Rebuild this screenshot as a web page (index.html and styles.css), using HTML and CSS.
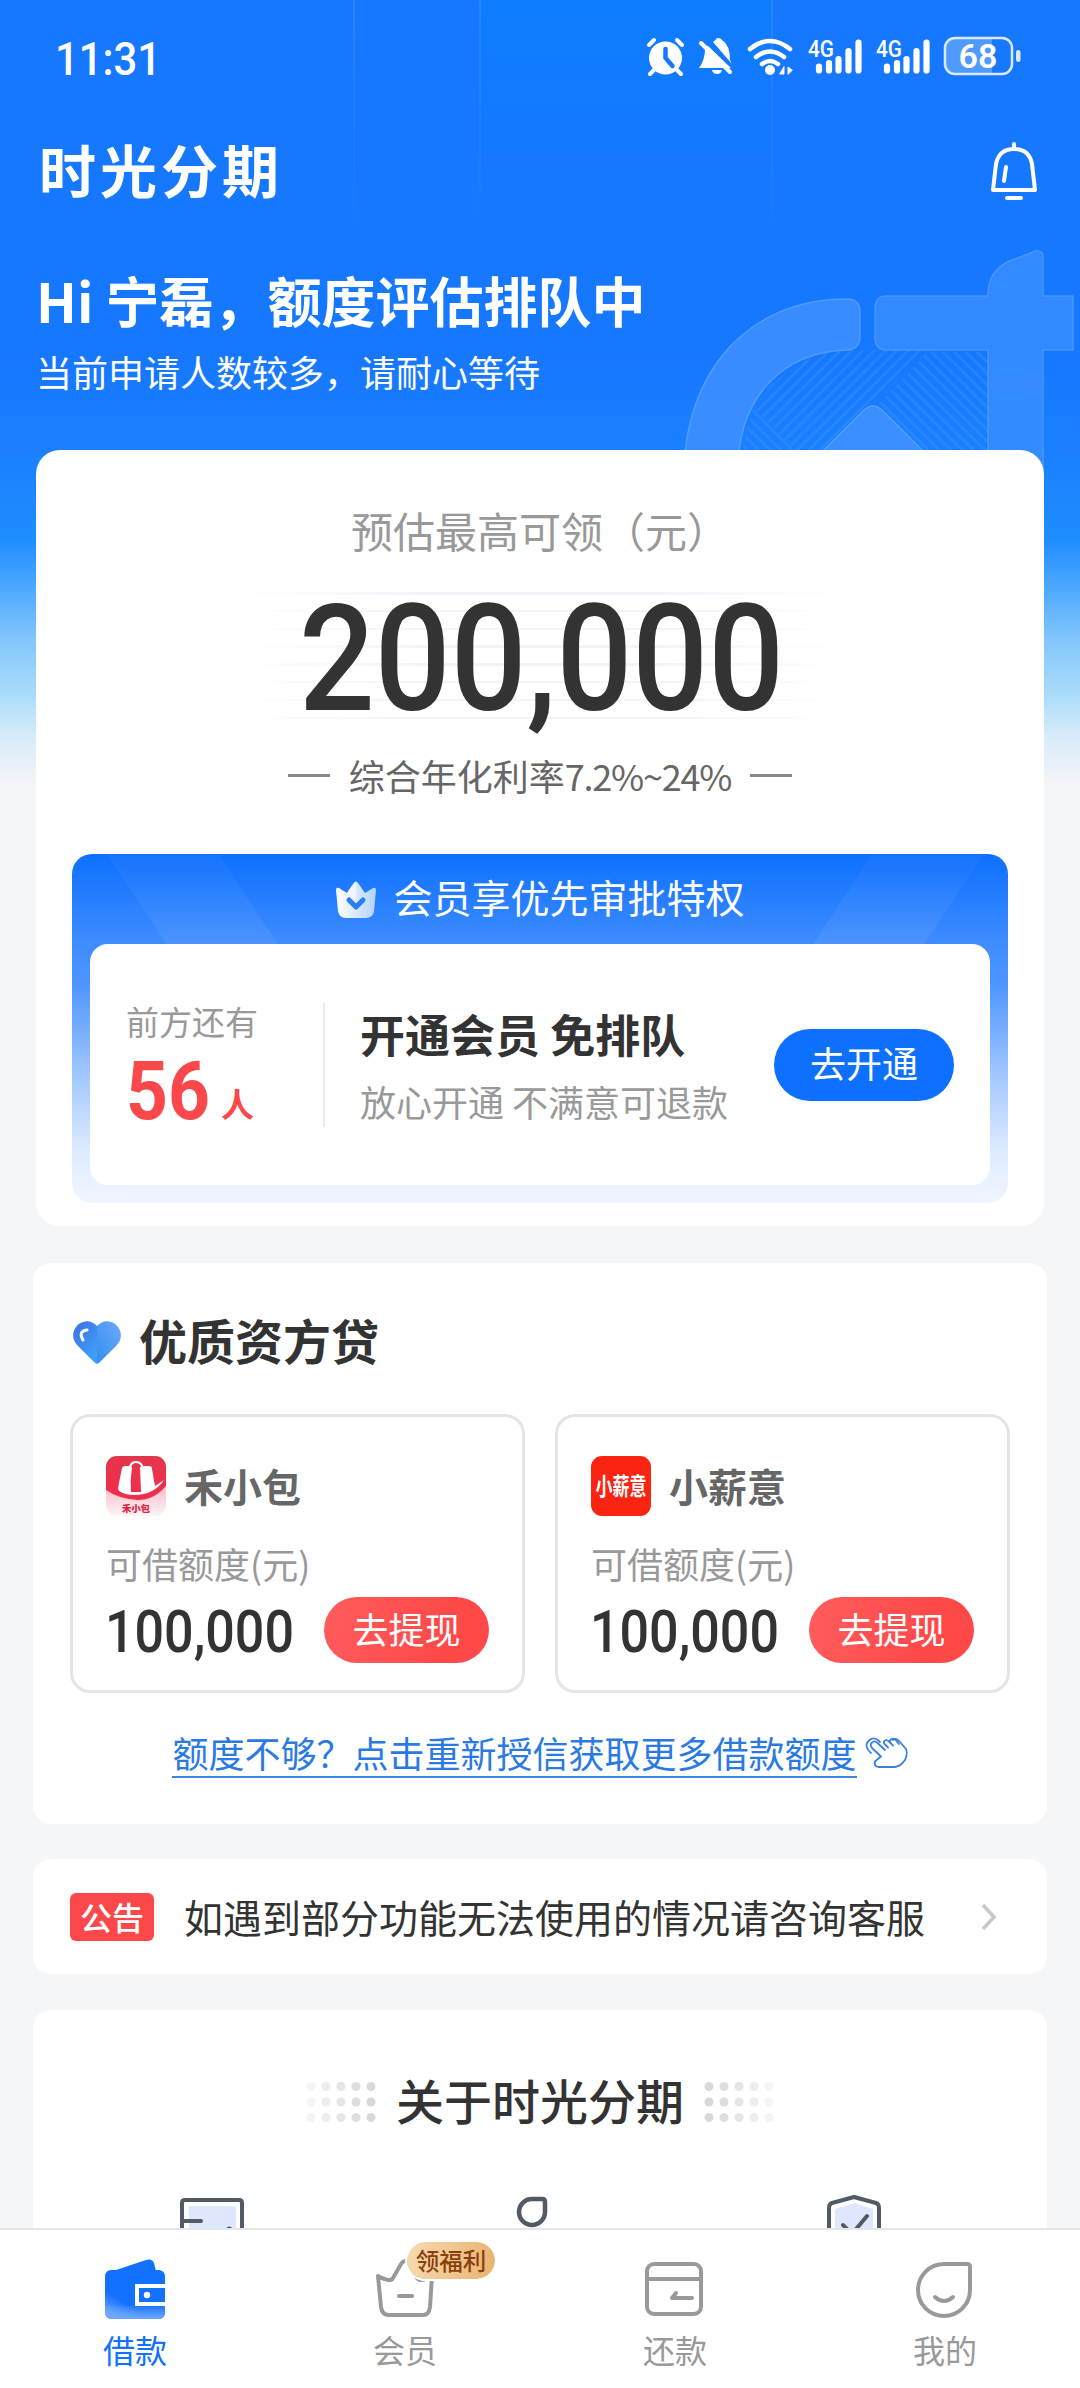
FILE: index.html
```html
<!DOCTYPE html>
<html lang="zh-CN">
<head>
<meta charset="utf-8">
<title>时光分期</title>
<link rel="stylesheet" href="styles.css">
</head>
<body>
<div class="app">
  <svg class="hero-art" viewBox="0 0 1080 790" width="1080" height="790" aria-hidden="true">
    <defs>
      <linearGradient id="band" x1="0" y1="0" x2="0" y2="1"><stop offset="0" stop-color="#08f" stop-opacity=".55"/><stop offset="1" stop-color="#08f" stop-opacity="0"/></linearGradient>
      <linearGradient id="edge" x1="0" y1="0" x2="0" y2="1"><stop offset="0" stop-color="#fff" stop-opacity=".09"/><stop offset="1" stop-color="#fff" stop-opacity="0"/></linearGradient>
      <pattern id="up" width="8" height="8" patternUnits="userSpaceOnUse" patternTransform="rotate(45)"><path d="M2 0v8" stroke="#3c96ff" stroke-width="2.500"/></pattern>
      <pattern id="down" width="8" height="8" patternUnits="userSpaceOnUse" patternTransform="rotate(-45)"><path d="M2 0v8" stroke="#3c96ff" stroke-width="2.500"/></pattern>
    </defs>
    <path d="M480 0H772V230H480Z" fill="url(#band)" opacity=".6"/>
    <path d="M353 0h2v240h-2zM479 0h2v240h-2zM771 0h2v240h-2z" fill="url(#edge)"/>
    <path d="M850 350H930L863 415L820 460H805L754 408Q790 352 850 350Z" fill="url(#up)" opacity=".4"/>
    <path d="M928 352H988V460H923L878 405ZM753 408L804 460H740Z" fill="url(#down)" opacity=".4"/>
    <g fill="#3f90ff" stroke="#57a5ff" stroke-width="1.5">
      <path d="M684 470C686 375 745 299 847 299Q860 299 860 312V337Q860 349 847 350C780 352 738 400 738 470Z" opacity=".85"/>
      <path d="M887 296H988Q987 270 1012 260L1036 251Q1043 250 1043 257V296H1073V350H1043V470H988V350H887Q875 350 875 338V308Q875 296 887 296Z" opacity=".72"/>
      <path d="M804 470L863 411Q873 401 883 411L942 470Z" opacity=".9"/>
    </g>
  </svg>

  <header class="hero">
    <div class="status">
      <svg class="clock" viewBox="0 0 110 70" width="110" height="70"><text x="0" y="50" textLength="106" lengthAdjust="spacingAndGlyphs">11:31</text></svg>
      <svg class="status-icons" viewBox="0 -12 376 60" width="376" height="60">
        <g fill="#fff" stroke="#fff" stroke-linecap="round">
          <circle cx="19.500" cy="21" r="16.500" stroke="none"/>
          <path d="M3 8L8 3M31 3l5 5M8 33l-4 4M31 33l4 4" stroke-width="4"/>
          <path d="M19.500 12v9l7 8" fill="none" stroke="#1677ff" stroke-width="4.500"/>
          <path d="M59 12Q59 23 53 31H86L63 8Q60 9 59 12ZM67 5Q70 3 71 1Q75 1 76 3Q84 8 84 23L86 27Z" stroke="none"/>
          <path d="M66 33h10q-1 4-5 4t-5-4Z" stroke="none"/>
          <path d="M57 2L88 32" stroke="#1677ff" stroke-width="3"/>
          <path d="M55 6L84 35" stroke-width="4"/>
          <g fill="none" stroke-width="4.500"><path d="M104 12Q124-4 144 12"/><path d="M110 20Q124 9 138 20"/><path d="M116 27Q124 21 132 27"/></g>
          <circle cx="124" cy="33" r="5" stroke="none"/>
          <path d="M138 30v7h-4zM142 37V30l4 3z" stroke-width="1"/>
          <path d="M173 29.500v4M183 26v7.500M192.500 22v11.500M202.500 14v19.500M212.500 5.500v28M241 29.500v4M251 26v7.500M260.500 22v11.500M270.500 14v19.500M280.500 5.500v28" stroke-width="6.200"/>
        </g>
        <g fill="#fff" class="net"><text x="162" y="20" textLength="26" lengthAdjust="spacingAndGlyphs">4G</text><text x="230" y="20" textLength="26" lengthAdjust="spacingAndGlyphs">4G</text></g>
        <path d="M309 1H346V37H309Q299 37 299 27V11Q299 1 309 1Z" fill="#fff" opacity=".25"/>
        <rect x="299" y="1" width="67" height="36" rx="10" fill="none" stroke="#d9eaff" stroke-width="2.500"/>
        <rect x="370" y="13" width="4.500" height="12" rx="2.200" fill="#d9eaff"/>
        <text class="battery" x="332" y="31" text-anchor="middle">68</text>
      </svg>
    </div>
    <div class="brand-row">
      <svg class="brand" viewBox="0 0 244 90" width="244" height="90"><text x="0" y="64" textLength="240" lengthAdjust="spacing">时光分期</text></svg>
      <svg class="bell" viewBox="0 0 48 60" width="48" height="60"><path d="M24 3V7M6 23Q9 8 24 8T42 23L45 49H3Z"/><path d="M16 26L14 40"/><path d="M17 57H31"/></svg>
    </div>
    <h1 class="greeting">Hi 宁磊，额度评估排队中</h1>
    <p class="wait">当前申请人数较多，请耐心等待</p>
  </header>

  <main class="content">
    <section class="quota">
      <p class="quota-label">预估最高可领（元）</p>
      <div class="quota-number">
        <svg viewBox="0 0 600 128" width="600" height="128"><text x="59" y="118" textLength="485" lengthAdjust="spacingAndGlyphs">200,000</text></svg>
      </div>
      <p class="rate"><i></i><span>综合年化利率<span class="tight">7.2%~24%</span></span><i></i></p>
      <div class="vip">
        <div class="vip-head">
          <svg viewBox="0 0 42 38" width="42" height="38"><defs><linearGradient id="cr" x1="0" x2="1"><stop offset="0" stop-color="#fff"/><stop offset="1" stop-color="#b4d3ff"/></linearGradient></defs><path d="M1 10Q1 7 4 8L12 13L19 3Q21 0 23 3L30 13L38 8Q41 7 41 10L39 31Q38 38 31 38H11Q4 38 3 31Z" fill="url(#cr)"/><path d="M21 1Q17 4 12 13L21 22Z" fill="#fff" opacity=".5"/><path d="M14 20L21 27L28 20" fill="none" stroke="#2b7df5" stroke-width="5" stroke-linecap="round" stroke-linejoin="round"/></svg>
          <span>会员享优先审批特权</span>
        </div>
        <div class="vip-body">
          <div class="queue">
            <span class="queue-label">前方还有</span>
            <div class="queue-count"><svg viewBox="0 0 86 76" width="86" height="76"><text x="0" y="65" textLength="84" lengthAdjust="spacingAndGlyphs">56</text></svg><b>人</b></div>
          </div>
          <div class="vip-text"><strong>开通会员 免排队</strong><span>放心开通 不满意可退款</span></div>
          <button class="open-btn">去开通</button>
        </div>
      </div>
    </section>

    <section class="card loans">
      <h2 class="loans-title">
        <svg viewBox="0 0 48 43" width="48" height="43"><defs><linearGradient id="ht" x1="0" y1="0" x2=".6" y2="1"><stop offset="0" stop-color="#3d6fe0"/><stop offset="1" stop-color="#3fa0fb"/></linearGradient><linearGradient id="hr" x1="0" y1="1" x2="1" y2="0"><stop offset="0" stop-color="#3290ee"/><stop offset="1" stop-color="#6fa8f8"/></linearGradient></defs><path d="M24 5C18-2 8-1 3 6C-2 13 0 20 5 25L21 41Q24 43 24 43Z" fill="url(#ht)"/><path d="M24 5C30-2 40-1 45 6C50 13 48 20 43 25L27 41Q24 43 24 43Z" fill="url(#hr)"/><path d="M14 9Q5 10 10 19" fill="none" stroke="#fff" stroke-width="3" stroke-linecap="round"/></svg>
        <span>优质资方贷</span>
      </h2>
      <div class="loan-list">
        <article class="loan">
          <div class="loan-name">
            <svg viewBox="0 0 60 60" width="60" height="60"><defs><clipPath id="lc"><rect width="60" height="60" rx="11"/></clipPath><linearGradient id="lp" x1="0" y1="0" x2="0" y2="1"><stop offset=".6" stop-color="#ffc7cf"/><stop offset="1" stop-color="#fff5f6"/></linearGradient><linearGradient id="lr" x1="0" y1="0" x2="0" y2="1"><stop offset="0" stop-color="#e2374d"/><stop offset="1" stop-color="#f52b4b"/></linearGradient></defs><g clip-path="url(#lc)"><path d="M0 0H60V60H0Z" fill="url(#lp)"/><path d="M0 0H60V30Q48 44 32 44Q13 43 0 34Z" fill="url(#lr)"/><path d="M16 12Q17 10 19 10H24L26 11Q24 24 25 36H35L34 11L36 10H43Q46 10 46 13L49 30L58 24Q48 39 28 39Q12 38 12 32Z" fill="#fff"/><path d="M24 13Q24 6 30 6T37 13" fill="none" stroke="#fff" stroke-width="2"/></g><text class="logo-a" x="16" y="56" textLength="28">禾小包</text></svg>
            <b>禾小包</b>
          </div>
          <p>可借额度(元)</p>
          <div class="loan-row"><svg class="amount" viewBox="0 0 190 72" width="190" height="72"><text x="-1" y="57.500" textLength="189" lengthAdjust="spacingAndGlyphs">100,000</text></svg><button>去提现</button></div>
        </article>
        <article class="loan">
          <div class="loan-name">
            <svg viewBox="0 0 60 60" width="60" height="60"><rect width="60" height="60" rx="11" fill="#fb2311"/><text class="logo-b" transform="translate(4.500 39) scale(.71 1)">小薪意</text></svg>
            <b>小薪意</b>
          </div>
          <p>可借额度(元)</p>
          <div class="loan-row"><svg class="amount" viewBox="0 0 190 72" width="190" height="72"><text x="-1" y="57.500" textLength="189" lengthAdjust="spacingAndGlyphs">100,000</text></svg><button>去提现</button></div>
        </article>
      </div>
      <div class="more"><a>额度不够？点击重新授信获取更多借款额度</a>
        <svg viewBox="0 0 44 32" width="44" height="32" fill="none" stroke="#3a80dc" stroke-width="1.800" stroke-linecap="round" stroke-linejoin="round"><path d="M6 16C1 12 0 7 4 3.500Q9-1 14 4L15 5M20 13L12.500 6Q10 3 7 5.500Q4 8 8 12L16 19.500L11 23.500Q9 25 10 28Q11 30 14 30H30Q36 29 40 23Q43 17 41 12L35 5Q31 0 28 3M23 10.500L20 7.500Q17.500 5 20 3.500Q22 2.500 24 4.500L28 8.500M25.500 6Q24 3.500 26.500 2Q29 1 31 3.500L34 7"/></svg>
      </div>
    </section>

    <section class="card notice"><em>公告</em><span>如遇到部分功能无法使用的情况请咨询客服</span><svg viewBox="0 0 16 26" width="16" height="26" fill="none" stroke="#c8c8c8" stroke-width="3.500"><path d="M2 1L13 13L2 25"/></svg></section>

    <section class="card about">
      <h2>
        <svg viewBox="0 0 70 42" width="70" height="42" fill="#d9d9d9"><defs><g id="col"><circle cx="5" cy="5.500" r="4.500"/><circle cx="5" cy="21" r="4.500"/><circle cx="5" cy="36.500" r="4.500"/></g></defs><use href="#col" opacity=".25"/><use href="#col" x="15" opacity=".45"/><use href="#col" x="30" opacity=".65"/><use href="#col" x="45" opacity=".85"/><use href="#col" x="60"/></svg>
        <span>关于时光分期</span>
        <svg viewBox="0 0 70 42" width="70" height="42" fill="#d9d9d9"><use href="#col"/><use href="#col" x="15" opacity=".85"/><use href="#col" x="30" opacity=".65"/><use href="#col" x="45" opacity=".45"/><use href="#col" x="60" opacity=".25"/></svg>
      </h2>
      <div class="features">
        <svg viewBox="0 0 66 60" width="66" height="60"><path d="M10 12H57V60H10Z" fill="#dfe7fe"/><path d="M3 60V9Q3 6 6 6H60Q63 6 63 9V60M3 27H22M47 38Q50 31 54 38" fill="none" stroke="#525b63" stroke-width="4" stroke-linecap="round"/></svg>
        <svg viewBox="0 0 66 60" width="66" height="60"><path d="M32 5H42Q45 5 45 8V18A13 13 0 1 1 32 5Z" fill="none" stroke="#525b63" stroke-width="4.500"/></svg>
        <svg viewBox="0 0 66 60" width="66" height="60"><path d="M14 15L33 9L52 15V60H14Z" fill="#dfe7fe"/><path d="M8 60V14Q8 10 11 9L33 3L55 9Q58 10 58 14V60M22 31L31 40L46 22" fill="none" stroke="#525b63" stroke-width="4" stroke-linecap="round" stroke-linejoin="round"/></svg>
      </div>
    </section>
  </main>

  <nav class="tabs">
    <div class="tab active">
      <svg viewBox="0 0 60 60" width="60" height="60"><defs><linearGradient id="wl" x1="0" y1="1" x2=".55" y2=".25"><stop offset="0" stop-color="#8ab6ff"/><stop offset=".5" stop-color="#1271ff"/><stop offset="1" stop-color="#1271ff"/></linearGradient><linearGradient id="wb" x1="0" y1="0" x2="0" y2="1"><stop offset=".7" stop-color="#70a8ff" stop-opacity="0"/><stop offset="1" stop-color="#70a8ff"/></linearGradient></defs><path d="M8 12L41 1Q47-1 49 4L51 12Z" fill="#1271ff"/><rect y="11" width="60" height="49" rx="6" fill="url(#wl)"/><rect y="11" width="60" height="49" rx="6" fill="url(#wb)"/><path d="M60 27H32V45H60" fill="#1271ff" stroke="#fff" stroke-width="4"/><circle cx="42" cy="36" r="3.200" fill="#fff"/></svg>
      <span>借款</span>
    </div>
    <div class="tab">
      <svg viewBox="0 0 60 60" width="60" height="60" fill="none" stroke="#999" stroke-width="4" stroke-linecap="round" stroke-linejoin="round"><path d="M3 17Q16 24 18 19L26 5Q30-1 34 5L42 19Q45 24 57 17L55 48Q54 56 48 56H14Q7 56 6 48Z"/><path d="M24 37H37"/></svg>
      <span>会员</span><b class="bubble">领福利</b>
    </div>
    <div class="tab">
      <svg viewBox="0 0 60 60" width="60" height="60" fill="none" stroke="#999" stroke-width="4" stroke-linecap="round" stroke-linejoin="round"><rect x="2" y="5" width="54" height="50" rx="7"/><path d="M3 20H55M47 39H27L31 34"/></svg>
      <span>还款</span>
    </div>
    <div class="tab">
      <svg viewBox="0 0 60 60" width="60" height="60" fill="none" stroke="#999" stroke-width="4" stroke-linecap="round" stroke-linejoin="round"><path d="M29 5H52Q55 5 55 8V31A26 26 0 1 1 29 5ZM20 38Q29 46 38 38"/></svg>
      <span>我的</span>
    </div>
  </nav>
</div>
</body>
</html>
```

FILE: styles.css
```css
* { box-sizing: border-box; }
body { margin: 0; background: #f5f6f8; }
h1, h2, p { margin: 0; font-weight: inherit; }
svg { display: block; flex: none; overflow: visible; }
button { border: 0; padding: 0; font: inherit; color: #fff; }
i, em { font-style: normal; }

.app {
  position: relative;
  width: 1080px;
  height: 2388px;
  overflow: hidden;
  display: flex;
  flex-direction: column;
  font-family: "Noto Sans CJK SC", sans-serif;
  color: #333;
  background: linear-gradient(#1677ff 0, #1677ff 350px, #1a80ff 450px, #1f8dff 540px, #4faaff 590px, #82c6fb 640px, #aadcfa 695px, #d6ebfa 735px, #f5f6f8 785px);
}
.hero-art { position: absolute; left: 0; top: 0; }

.hero { position: relative; height: 450px; color: #fff; padding: 0 36px; }
.status { height: 115px; padding: 25px 22px 0 19px; display: flex; justify-content: space-between; }
.clock { font: 500 47px Roboto, sans-serif; fill: #fff; }
.net { font: 500 24px Roboto, sans-serif; }
.battery { font: 600 34px Roboto, sans-serif; fill: #fff; }
.brand-row { display: flex; justify-content: space-between; align-items: flex-start; padding: 14px 6px 0 3px; height: 145px; }
.brand { font-size: 57px; font-weight: 700; fill: #fff; }
.bell { margin-top: 12px; fill: none; stroke: #fff; stroke-width: 4px; stroke-linecap: round; stroke-linejoin: round; }
.greeting { font-size: 54px; line-height: 80px; font-weight: 700; }
.wait { font-size: 36px; line-height: 54px; margin-top: 4px; }

.content { position: relative; flex: 1; min-height: 0; padding: 0 33px; display: flex; flex-direction: column; overflow: hidden; }
.card { background: #fff; border-radius: 18px; flex: none; }

.quota { margin: 0 3px 37px; height: 776px; flex: none; border-radius: 24px; background: #fff; padding: 50px 36px 0; text-align: center; }
.quota-label { font-size: 42px; line-height: 60px; color: #999; }
.quota-number {
  width: 600px;
  height: 128px;
  margin: 32px auto 0;
  font: 500 148px Roboto, sans-serif;
  background:
    linear-gradient(90deg, #fff, transparent 30%, transparent 70%, #fff),
    repeating-linear-gradient(#f3f4f9 0 2.5px, #fff 2.5px 17.8px);
}
.quota-number text { fill: #333; }
.rate { display: flex; justify-content: center; align-items: center; gap: 19px; font-size: 36px; color: #666; margin-top: 29px; height: 52px; }
.rate i { width: 42px; height: 3px; background: #888; }
.tight { letter-spacing: -1.2px; }
.vip { margin-top: 53px; height: 349px; border-radius: 20px; padding: 0 18px 18px; display: flex; flex-direction: column; background: linear-gradient(#0d70ff, #3f8cff 90px, #4d95ff 130px, #a9ccff 230px, #dfecff 300px, #f0f6ff); }
.vip-head { position: relative; height: 90px; display: flex; justify-content: center; align-items: center; gap: 16px; font-size: 39px; line-height: 82px; color: #fff; margin: 0 -18px; }
.vip-head span { height: 88px; }
.vip-head::before, .vip-head::after { content: ""; position: absolute; top: 0; left: 35px; width: 171px; height: 90px; background: linear-gradient(#1d78ff, #5c9eff); opacity: .45; clip-path: polygon(0 0, 65% 0, 100% 100%, 35% 100%); }
.vip-head::after { left: auto; right: 24px; transform: scaleX(-1); }
.vip-body { flex: 1; background: #fff; border-radius: 18px; display: flex; align-items: center; padding: 0 36px; text-align: left; }
.queue { width: 199px; height: 124px; border-right: 2px solid #ececec; display: flex; flex-direction: column; }
.queue-label { font-size: 33px; line-height: 36px; color: #999; }
.queue-count { display: flex; align-items: flex-end; margin-top: 15px; color: #fc474b; }
.queue-count svg { font: 700 82px Roboto, sans-serif; fill: #fc474b; }
.queue-count b { font-size: 33px; line-height: 46px; margin: 0 0 4px 9px; font-weight: 600; }
.vip-text { flex: 1; display: flex; flex-direction: column; padding: 0 0 1px 35px; font-size: 36px; line-height: 54px; color: #999; white-space: nowrap; }
.vip-text strong { font-size: 45px; line-height: 66px; color: #333; margin-bottom: 7px; }
.open-btn { width: 180px; height: 72px; border-radius: 36px; background: #0d70ff; font-size: 36px; line-height: 67px; padding-bottom: 5px; }

.loans { height: 561px; padding: 43px 37px 0; margin-bottom: 35px; }
.loans-title { display: flex; align-items: center; gap: 18px; font-size: 48px; line-height: 72px; height: 72px; font-weight: 700; padding-left: 3px; }
.loans-title span { margin-top: -6px; }
.loan-list { display: flex; justify-content: space-between; margin-top: 36px; }
.loan { width: 455px; height: 279px; border: 3px solid #e5e5e5; border-radius: 20px; padding: 39px 33px 0; }
.loan-name { display: flex; align-items: center; gap: 18px; height: 60px; font-size: 39px; color: #666; }
.loan-name b { margin-top: -3px; }
.loan p { font-size: 36px; line-height: 52px; color: #999; margin-top: 21px; }
.loan-row { display: flex; justify-content: space-between; align-items: center; margin-top: 5px; }
.loan-row button { width: 165px; height: 66px; border-radius: 33px; background: linear-gradient(100deg, #ff5c5c, #ff4848 75%); font-size: 36px; line-height: 62px; padding-bottom: 4px; }
.amount { font: 500 60px Roboto, sans-serif; fill: #333; }
.logo-a { font-size: 9.5px; font-weight: 900; fill: #de2442; }
.logo-b { font-size: 24px; font-weight: 700; fill: #fff; }
.more { display: flex; justify-content: center; align-items: center; gap: 8px; margin-top: 35px; font-size: 36px; color: #2a7ae4; padding-left: 1px; }
.more a { line-height: 48px; border-bottom: 2px solid #3a85e6; }

.notice { height: 115px; margin-bottom: 36px; display: flex; align-items: center; padding: 0 50px 0 37px; }
.notice em { width: 84px; height: 48px; border-radius: 6px; background: #fc474b; color: #fff; text-align: center; font-size: 32px; line-height: 47px; font-weight: 500; }
.notice span { flex: 1; margin-left: 30px; margin-top: -1px; font-size: 39px; }

.about { height: 260px; padding-top: 56px; }
.about h2 { display: flex; justify-content: center; align-items: center; gap: 20px; font-size: 48px; line-height: 72px; height: 72px; font-weight: 500; }
.about h2 span { margin-top: -6px; }
.features { display: grid; grid-template-columns: repeat(3, 321px); justify-items: center; padding-left: 18px; margin-top: 56px; }

.tabs { position: relative; height: 160px; flex: none; border-top: 2px solid #e4e7ea; background: #fff; display: grid; grid-template-columns: repeat(4, 1fr); }
.tab { position: relative; display: flex; flex-direction: column; align-items: center; padding-top: 29px; font-size: 32px; line-height: 44px; color: #999; }
.tab span { margin-top: 8px; }
.active { color: #1271ff; }
.bubble { position: absolute; left: 137px; top: 12px; width: 88px; height: 37px; border-radius: 19px; background: linear-gradient(100deg, #f7dab2, #e9b36e); outline: 2px solid #fff; color: #893f0c; font-size: 23.5px; line-height: 36px; font-weight: 500; text-align: center; }
```
